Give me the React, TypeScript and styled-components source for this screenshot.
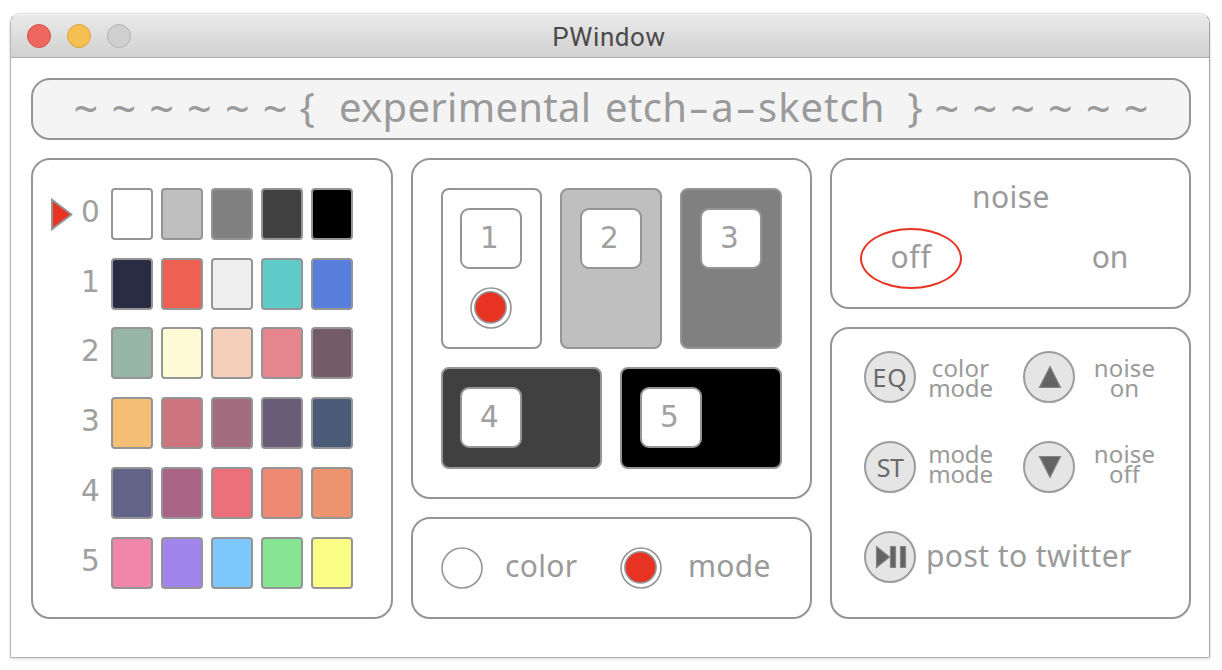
import React from "react";
import styled, { createGlobalStyle } from "styled-components";

const line = "#959595";
const ink = "#9a9a9a";
const red = "#e83323";
const sans = '"Noto Sans", "Open Sans", sans-serif';
const digits = '"DejaVu Sans", "Noto Sans", sans-serif';

const GlobalStyle = createGlobalStyle`
  *, *::before, *::after { box-sizing: border-box; }
  body { margin: 0; background: #fefefe; overflow: hidden; }
`;

const Desktop = styled.div`
  height: 670px;
  padding: 13px 12px 12px 10px;
  font-family: ${sans};
  color: ${ink};
`;

const Window = styled.div`
  width: 1200px;
  height: 645px;
  display: flex;
  flex-direction: column;
  border: 1px solid #b3b5b5;
  border-top-color: #e2e4e4;
  border-right-color: #a2a2a2;
  border-radius: 10px 10px 2px 2px;
  background: #fefefe;
  box-shadow: 0 1px 3px rgba(0, 0, 0, 0.16);
`;

const TitleBar = styled.header`
  height: 44px;
  flex: none;
  display: grid;
  grid-template-columns: 1fr auto 1fr;
  align-items: center;
  padding: 0 18px 0 16px;
  border-bottom: 1px solid #adadad;
  border-radius: 9px 9px 0 0;
  background: linear-gradient(#f4f4f4 0, #e9e9e9 2px, #d1d1d1 100%);
`;

const Lights = styled.div`
  display: flex;
  gap: 16px;
`;

const Light = styled.span<{ $fill: string; $edge: string }>`
  width: 24px;
  height: 24px;
  border-radius: 50%;
  border: 1px solid ${(p) => p.$edge};
  background: ${(p) => p.$fill};
`;

const WindowTitle = styled.h1`
  margin: 0;
  padding-top: 3px;
  font: 400 26px/30px Roboto, sans-serif;
  letter-spacing: 0.6px;
  color: #4a4a4a;
`;

const Content = styled.main`
  flex: 1;
  padding: 20px 18px 0 20px;
`;

const Panel = styled.section`
  border: 2px solid ${line};
  border-radius: 19px;
  background: #fefefe;
`;

const Banner = styled(Panel)`
  width: 1160px;
  height: 62px;
  display: flex;
  align-items: flex-start;
  padding-left: 34px;
  background: #f4f4f4;
`;

const Waves = styled.div`
  display: flex;
  width: 227px;
`;

const Wave = styled.span`
  flex: 1;
  text-align: center;
  font-size: 43px;
  line-height: 57px;
`;

const Brace = styled.span`
  width: 26px;
  text-align: center;
  font-size: 40px;
  line-height: 53px;
`;

const BannerText = styled.h2`
  margin: 0 18px 0 19px;
  width: 545px;
  white-space: nowrap;
  font-size: 40px;
  font-weight: 400;
  line-height: 53px;
  letter-spacing: 0.3px;
  word-spacing: 3px;
`;

const Dash = styled.span`
  display: inline-block;
  width: 24px;
  text-align: center;
  transform: scaleX(1.6);
`;

const Spread = styled.span`
  letter-spacing: 1px;
`;

const Columns = styled.div`
  display: grid;
  grid-template-columns: 362px 401px 361px;
  gap: 18px;
  height: 461px;
  margin-top: 18px;
`;

const Column = styled.div<{ $rows: string }>`
  display: grid;
  grid-template-rows: ${(p) => p.$rows};
  gap: 18px;
`;

const PalettePanel = styled(Panel)`
  display: flex;
  flex-direction: column;
  gap: 17.72px;
  padding: 28px 0 0 18px;
`;

const PaletteRow = styled.div`
  flex: none;
  height: 52px;
  display: grid;
  grid-template-columns: 22px 38px auto;
  align-items: center;
`;

const Pointer = styled.svg`
  display: block;
  width: 22px;
  height: 33px;
`;

const PaletteIndex = styled.span`
  grid-column: 2;
  align-self: start;
  padding-right: 3px;
  text-align: center;
  font: 29.5px/48px ${digits};
  color: #a0a0a0;
`;

const Swatches = styled.div`
  display: flex;
  gap: 8px;
`;

const Swatch = styled.span<{ $color: string }>`
  width: 42px;
  height: 52px;
  border: 2px solid ${line};
  border-radius: 4px;
  background: ${(p) => p.$color};
`;

const TilePanel = styled(Panel)`
  display: flex;
  flex-direction: column;
  gap: 18px;
  padding: 28px;
`;

const TileRow = styled.div`
  display: flex;
  gap: 18px;
`;

const Tile = styled.div<{ $w: number; $h: number; $color: string; $inset: number }>`
  flex: none;
  width: ${(p) => p.$w}px;
  height: ${(p) => p.$h}px;
  padding: 18px 0 0 ${(p) => p.$inset}px;
  border: 2px solid ${line};
  border-radius: 8px;
  background: ${(p) => p.$color};
`;

const TileNumber = styled.div`
  width: 62px;
  height: 61px;
  padding-right: 3px;
  border: 2px solid ${line};
  border-radius: 9px;
  background: #fefefe;
  text-align: center;
  font: 29.5px/57px ${digits};
  color: #a0a0a0;
`;

const TileRadio = styled.div`
  padding: 18px 0 0 10px;
`;

const RadioMark = styled.svg`
  display: block;
  width: 42px;
  height: 42px;
  stroke: ${line};
  stroke-width: 1.6;
`;

const ModePanel = styled(Panel)`
  display: grid;
  grid-template-columns: 64px 115px 68px auto;
  align-items: center;
  padding-left: 28px;
`;

const Word = styled.span<{ $track?: number; $lift?: number }>`
  font-size: 30px;
  line-height: 40px;
  letter-spacing: ${(p) => p.$track ?? 0.3}px;
  padding-bottom: ${(p) => p.$lift ?? 0}px;
  white-space: nowrap;
`;

const NoisePanel = styled(Panel)`
  padding: 0 28px;
`;

const NoiseHeading = styled.div`
  height: 68px;
  padding: 17px 0 0 1px;
  text-align: center;
`;

const NoiseOptions = styled.div`
  display: flex;
  justify-content: space-between;
`;

const NoiseOption = styled.div<{ $selected?: boolean }>`
  width: 102px;
  height: 61px;
  display: flex;
  align-items: center;
  justify-content: center;
  padding-bottom: 4px;
  border: 2px solid ${(p) => (p.$selected ? red : "transparent")};
  border-radius: 50%;
`;

const KeyPanel = styled(Panel)`
  display: flex;
  flex-direction: column;
  gap: 38px;
  padding: 22px 0 0 32px;
`;

const KeyRow = styled.div`
  height: 52px;
  display: grid;
  grid-template-columns: 52px 107px 52px 99px;
`;

const KeyCap = styled.span`
  width: 52px;
  height: 52px;
  display: flex;
  align-items: center;
  justify-content: center;
  border: 2px solid #9c9c9c;
  border-radius: 50%;
  background: #e5e5e5;
  color: #6a6a6a;
  font-size: 25px;
  line-height: 36px;
`;

const KeyLetters = styled.span<{ $track: number }>`
  letter-spacing: ${(p) => p.$track}px;
`;

const KeyLabel = styled.div<{ $top: number; $gutter?: number }>`
  padding-top: ${(p) => p.$top}px;
  padding-right: ${(p) => p.$gutter ?? 0}px;
  text-align: center;
  font-size: 24px;
  line-height: 20px;
`;

const LabelLine = styled.div<{ $track: number }>`
  letter-spacing: ${(p) => p.$track}px;
`;

const PostRow = styled.div`
  height: 52px;
  display: flex;
  align-items: center;
  gap: 10px;
`;

const Glyph = styled.svg`
  display: block;
  margin-left: 2px;
  fill: #636363;
  stroke: #858585;
  stroke-width: 1.2;
`;

const palettes = [
  ["#fefefe", "#bfbfbf", "#808080", "#404040", "#000000"],
  ["#2a2c44", "#ee6052", "#efefef", "#5ecbc8", "#587edb"],
  ["#97b6a8", "#fefad5", "#f6cfbb", "#e6858d", "#735c67"],
  ["#f4be74", "#cc757e", "#a36d7f", "#685c76", "#495b76"],
  ["#616486", "#a96485", "#ec7079", "#ee8a73", "#ed946e"],
  ["#f086aa", "#a284ed", "#7cc8fa", "#86e593", "#fafe85"],
];

const WaveRun = () => (
  <Waves>
    {[0, 1, 2, 3, 4, 5].map((i) => (
      <Wave key={i}>~</Wave>
    ))}
  </Waves>
);

const Radio = ({ checked = false }: { checked?: boolean }) => (
  <RadioMark viewBox="0 0 42 42">
    <circle cx="21" cy="21" r="20" fill="#fefefe" />
    {checked && <circle cx="20.5" cy="20.3" r="15.6" fill={red} />}
  </RadioMark>
);

export default function App() {
  return (
    <>
      <GlobalStyle />
      <Desktop>
        <Window>
          <TitleBar>
            <Lights>
              <Light $fill="#ed6760" $edge="#d2544e" />
              <Light $fill="#f5c051" $edge="#d9a341" />
              <Light $fill="#cfcfcf" $edge="#b3b3b3" />
            </Lights>
            <WindowTitle>PWindow</WindowTitle>
          </TitleBar>
          <Content>
            <Banner>
              <WaveRun />
              <Brace>{"{"}</Brace>
              <BannerText>
                experimental etch<Dash>-</Dash>a<Dash>-</Dash>
                <Spread>sketch</Spread>
              </BannerText>
              <Brace>{"}"}</Brace>
              <WaveRun />
            </Banner>
            <Columns>
              <PalettePanel>
                {palettes.map((colors, row) => (
                  <PaletteRow key={row}>
                    {row === 0 && (
                      <Pointer viewBox="0 0 22 33">
                        <path d="M1 1.8 L20.5 16.5 L1 31.2 Z" fill={red} stroke={line} strokeWidth="2" />
                      </Pointer>
                    )}
                    <PaletteIndex>{row}</PaletteIndex>
                    <Swatches>
                      {colors.map((c) => (
                        <Swatch key={c} $color={c} />
                      ))}
                    </Swatches>
                  </PaletteRow>
                ))}
              </PalettePanel>

              <Column $rows="341px 102px">
                <TilePanel>
                  <TileRow>
                    <Tile $w={101} $h={161} $color="#fefefe" $inset={17}>
                      <TileNumber>1</TileNumber>
                      <TileRadio>
                        <Radio checked />
                      </TileRadio>
                    </Tile>
                    <Tile $w={102} $h={161} $color="#bfbfbf" $inset={18}>
                      <TileNumber>2</TileNumber>
                    </Tile>
                    <Tile $w={102} $h={161} $color="#808080" $inset={18}>
                      <TileNumber>3</TileNumber>
                    </Tile>
                  </TileRow>
                  <TileRow>
                    <Tile $w={161} $h={102} $color="#404040" $inset={17}>
                      <TileNumber>4</TileNumber>
                    </Tile>
                    <Tile $w={162} $h={102} $color="#000000" $inset={18}>
                      <TileNumber>5</TileNumber>
                    </Tile>
                  </TileRow>
                </TilePanel>
                <ModePanel>
                  <Radio />
                  <Word $lift={4}>color</Word>
                  <Radio checked />
                  <Word $lift={4}>mode</Word>
                </ModePanel>
              </Column>

              <Column $rows="151px 292px">
                <NoisePanel>
                  <NoiseHeading>
                    <Word $track={0.45}>noise</Word>
                  </NoiseHeading>
                  <NoiseOptions>
                    <NoiseOption $selected>
                      <Word $track={0.8}>off</Word>
                    </NoiseOption>
                    <NoiseOption>
                      <Word $track={0}>on</Word>
                    </NoiseOption>
                  </NoiseOptions>
                </NoisePanel>
                <KeyPanel>
                  <KeyRow>
                    <KeyCap>
                      <KeyLetters $track={0.8}>EQ</KeyLetters>
                    </KeyCap>
                    <KeyLabel $top={7} $gutter={18}>
                      <LabelLine $track={0.2}>color</LabelLine>
                      <LabelLine $track={-0.2}>mode</LabelLine>
                    </KeyLabel>
                    <KeyCap>
                      <Glyph width="24" height="24" viewBox="0 0 24 24">
                        <path d="M12 1.5 L22.5 22.5 H1.5 Z" />
                      </Glyph>
                    </KeyCap>
                    <KeyLabel $top={7}>
                      <LabelLine $track={0.2}>noise</LabelLine>
                      <LabelLine $track={0}>on</LabelLine>
                    </KeyLabel>
                  </KeyRow>
                  <KeyRow>
                    <KeyCap>
                      <KeyLetters $track={-0.6}>ST</KeyLetters>
                    </KeyCap>
                    <KeyLabel $top={3} $gutter={18}>
                      <LabelLine $track={-0.2}>mode</LabelLine>
                      <LabelLine $track={-0.2}>mode</LabelLine>
                    </KeyLabel>
                    <KeyCap>
                      <Glyph width="24" height="24" viewBox="0 0 24 24">
                        <path d="M1.5 1.5 H22.5 L12 22.5 Z" />
                      </Glyph>
                    </KeyCap>
                    <KeyLabel $top={3}>
                      <LabelLine $track={0.2}>noise</LabelLine>
                      <LabelLine $track={0}>off</LabelLine>
                    </KeyLabel>
                  </KeyRow>
                  <PostRow>
                    <KeyCap>
                      <Glyph width="32" height="24" viewBox="0 0 32 24">
                        <path d="M1.5 1.5 L14.5 12 L1.5 22.5 Z M15.5 1.5 H20.5 V22.5 H15.5 Z M25.5 1.5 H30.5 V22.5 H25.5 Z" />
                      </Glyph>
                    </KeyCap>
                    <Word $track={0.42} $lift={2}>post to twitter</Word>
                  </PostRow>
                </KeyPanel>
              </Column>
            </Columns>
          </Content>
        </Window>
      </Desktop>
    </>
  );
}
